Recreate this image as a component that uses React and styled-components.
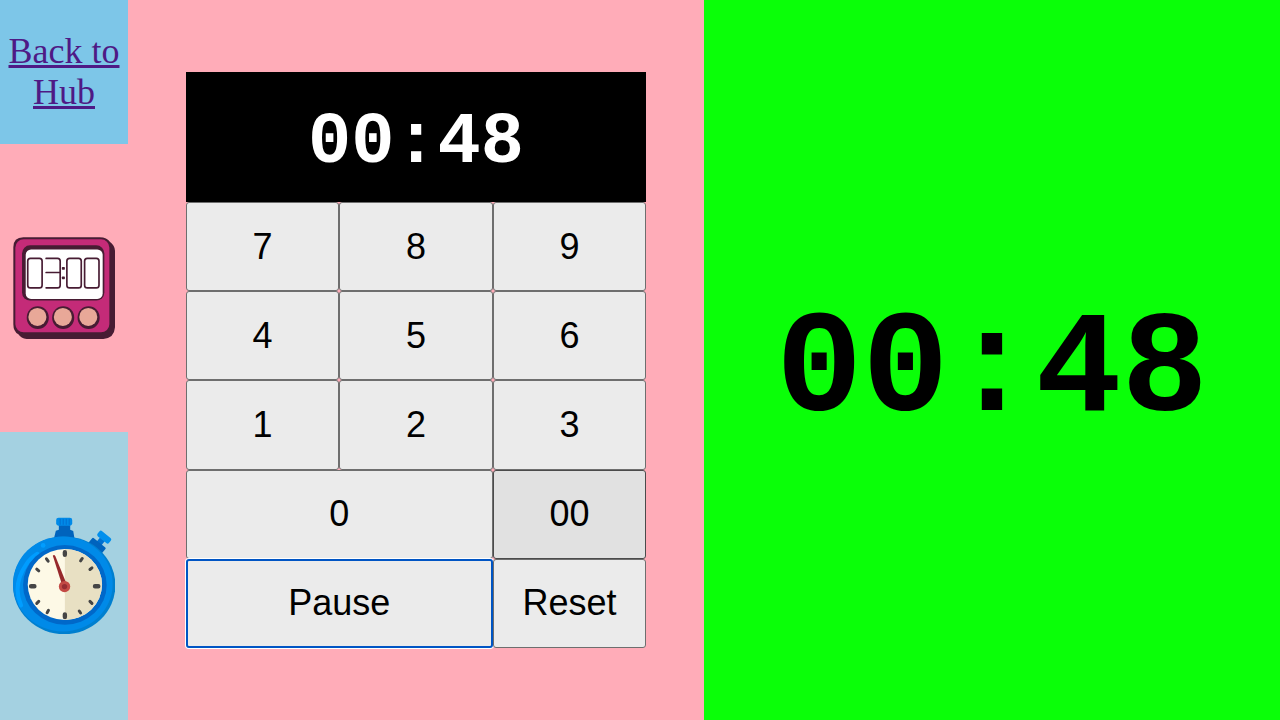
import React from "react";
import styled, { createGlobalStyle } from "styled-components";

const GlobalStyle = createGlobalStyle`
  *, *::before, *::after { box-sizing: border-box; }
  body { margin: 0; font-family: "Liberation Serif", "Times New Roman", serif; }
`;

const Page = styled.main`
  display: grid;
  grid-template-columns: 10fr 45fr 45fr;
  min-height: 100vh;
`;

const Sidebar = styled.nav`
  display: grid;
  grid-template-rows: 1fr 2fr 2fr;
`;

const tones = { hub: "#7dc6e8", timer: "#ffacb8", stopwatch: "#a4d1e1" };

const NavLink = styled.a`
  display: flex;
  align-items: center;
  justify-content: center;
  background: ${({ $tone }) => tones[$tone]};
  color: #4e1a85;
  font-size: 36px;
  line-height: 41px;
  text-align: center;

  svg { display: block; width: 80%; height: auto; }
`;

const TimerPanel = styled.section`
  display: flex;
  padding: 10vh 4.5vw;
  background: #ffacb8;
`;

const Keypad = styled.div`
  flex: 1;
  display: grid;
  grid-template-columns: repeat(3, 1fr);
  grid-template-rows: 130px repeat(5, 1fr);
`;

const Time = styled.output`
  font-family: "Liberation Mono", "Courier New", monospace;
  font-weight: 700;
  line-height: 1;
`;

const Display = styled(Time)`
  grid-column: 1 / -1;
  display: flex;
  align-items: center;
  justify-content: center;
  padding-top: 12px;
  background: #000;
  color: #fff;
  font-size: 72px;
`;

const Key = styled.button`
  grid-column: span ${({ $span = 1 }) => $span};
  padding: 0;
  border: 1px solid ${({ $active }) => ($active ? "#4b4b4b" : "#6e6e6e")};
  border-radius: 3px;
  background: ${({ $active }) => ($active ? "#e1e1e1" : "#ebebeb")};
  color: #000;
  font: 36px "Liberation Sans", Arial, sans-serif;
  outline: none;

  ${({ $focused }) => $focused && `
    border: 2px solid #0055c4;
    box-shadow: 0 0 0 1px #fff;
  `}
`;

const ScreenPanel = styled.section`
  display: flex;
  align-items: center;
  justify-content: center;
  background: #0aff08;
`;

const BigTime = styled(Time)`
  padding-top: 24px;
  font-size: 144px;
`;

function TimerIcon() {
  return (
    <svg viewBox="27 27 306 306" aria-hidden="true">
      <path d="M58 28H286Q308 28 317 42Q332 52 332 72V292Q332 332 292 332H72Q52 332 43 318Q28 310 28 288V58Q28 28 58 28Z" fill="#471c33" />
      <rect x="34" y="34" width="281" height="278" rx="25" fill="#c42b78" />
      <rect x="54" y="52" width="246" height="165" rx="24" fill="#471c33" />
      <rect x="65" y="64" width="230" height="148" rx="16" fill="#fff" />
      <g fill="none" stroke="#471c33" strokeWidth="5" strokeLinejoin="round" strokeLinecap="round">
        <rect x="71" y="91" width="43" height="88" rx="8" />
        <path d="M126 91H160Q168 91 168 99V171Q168 179 160 179H126M126 133H167" />
        <rect x="188" y="91" width="43" height="88" rx="8" />
        <rect x="241" y="91" width="43" height="88" rx="8" />
      </g>
      <rect x="173" y="117" width="9" height="8" rx="2" fill="#471c33" />
      <rect x="173" y="145" width="9" height="8" rx="2" fill="#471c33" />
      {[101, 177, 253].map((x) => (
        <g key={x}>
          <ellipse cx={x} cy="268" rx="33" ry="34" fill="#471c33" />
          <circle cx={x - 1} cy="266" r="27" fill="#e8a898" />
        </g>
      ))}
    </svg>
  );
}

function StopwatchIcon() {
  return (
    <svg viewBox="27 22 306 351" aria-hidden="true">
      <path d="M164 44H198V60L207 64L211 88H149L155 63L164 60Z" fill="#0063bd" />
      <rect x="156" y="24" width="48" height="24" rx="7" fill="#008ae8" />
      <path d="M168 27V45M177 27V45M186 27V45M195 27V45" stroke="#0070d1" strokeWidth="3" />
      <g transform="rotate(39 282 104)">
        <rect x="273" y="80" width="18" height="25" fill="#0070d1" />
        <rect x="256" y="98" width="51" height="23" rx="3" fill="#0063bd" />
        <rect x="260" y="66" width="44" height="20" rx="6" fill="#008fed" />
      </g>
      <ellipse cx="180" cy="226" rx="153" ry="146" fill="#007fcf" />
      <ellipse cx="176" cy="222" rx="149" ry="142" fill="#008ae8" />
      <path d="M51 286Q24 225 67 163Q78 146 100 132" fill="none" stroke="#009dff" strokeWidth="12" strokeLinecap="round" />
      <circle cx="117" cy="107" r="7" fill="#009dff" />
      <ellipse cx="182" cy="225" rx="125" ry="119" fill="#0068c9" />
      <ellipse cx="182" cy="224" rx="111" ry="106" fill="#fdf9e6" />
      <path d="M182 118A111 106 0 0 1 182 330Z" fill="#e8e0c3" />
      <g stroke="#454545" strokeLinecap="round">
        <path d="M182 127V135M182 313V321M81 229H91M272 229H282" strokeWidth="13" />
        <path d="M127 147L132 154M234 146L229 153M98 178L104 183M263 174L257 179M98 280L104 274M263 280L257 274M129 308L133 301M229 309L225 303" strokeWidth="9" />
      </g>
      <path d="M146 138Q150 133 154 140L189 227L176 232Z" fill="#96282b" />
      <circle cx="181" cy="230" r="17" fill="#c34a44" />
      <circle cx="181" cy="230" r="8" fill="#962d32" />
    </svg>
  );
}

const keys = [
  { label: "7" }, { label: "8" }, { label: "9" },
  { label: "4" }, { label: "5" }, { label: "6" },
  { label: "1" }, { label: "2" }, { label: "3" },
  { label: "0", span: 2 }, { label: "00", active: true },
  { label: "Pause", span: 2, focused: true }, { label: "Reset" },
];

export default function App() {
  const time = "00:48";
  return (
    <>
      <GlobalStyle />
      <Page>
        <Sidebar>
          <NavLink href="#hub" $tone="hub">Back to Hub</NavLink>
          <NavLink href="#timer" $tone="timer" aria-label="Timer"><TimerIcon /></NavLink>
          <NavLink href="#stopwatch" $tone="stopwatch" aria-label="Stopwatch"><StopwatchIcon /></NavLink>
        </Sidebar>
        <TimerPanel>
          <Keypad>
            <Display>{time}</Display>
            {keys.map(({ label, span, active, focused }) => (
              <Key key={label} type="button" $span={span} $active={active} $focused={focused}>
                {label}
              </Key>
            ))}
          </Keypad>
        </TimerPanel>
        <ScreenPanel>
          <BigTime>{time}</BigTime>
        </ScreenPanel>
      </Page>
    </>
  );
}
